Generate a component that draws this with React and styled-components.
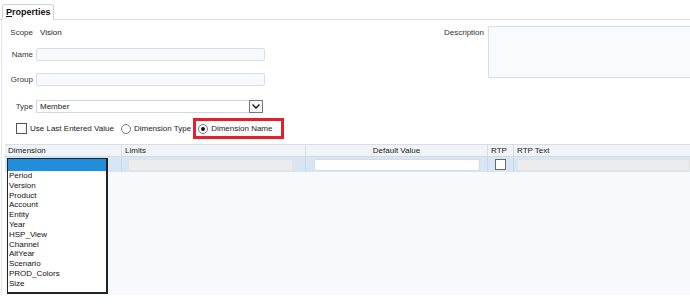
import React from 'react'
import styled, { createGlobalStyle } from 'styled-components'

const GlobalStyle = createGlobalStyle`
  body {
    margin: 0;
    background: #fff;
    font-family: 'Liberation Sans', Arial, sans-serif;
    font-size: 8px;
    color: #222;
  }
  * { box-sizing: border-box; }
`

const dimensions = [
  'Period', 'Version', 'Product', 'Account', 'Entity', 'Year',
  'HSP_View', 'Channel', 'AltYear', 'Scenario', 'PROD_Colors', 'Size',
]

const columns = [
  { label: 'Dimension' },
  { label: 'Limits' },
  { label: 'Default Value', center: true },
  { label: 'RTP' },
  { label: 'RTP Text' },
]

const Page = () => (
  <Wrapper>
    <GlobalStyle />
    <TabBar>
      <Tab>
        <u>P</u>roperties
      </Tab>
    </TabBar>
    <Panel>
      <Form>
        <LeftCol>
          <Row $top={6} $h={12}>
            <Label>Scope</Label>
            <Value>Vision</Value>
          </Row>
          <Row $top={10} $h={13}>
            <Label>Name</Label>
            <Input />
          </Row>
          <Row $top={12} $h={13}>
            <Label>Group</Label>
            <Input />
          </Row>
          <Row $top={14} $h={13}>
            <Label>Type</Label>
            <Select>
              <span>Member</span>
              <SelectButton>
                <svg width='10' height='7' viewBox='0 0 10 7'>
                  <polyline points='1.5,1.5 5,5 8.5,1.5' fill='none' stroke='#111' strokeWidth='1.4' />
                </svg>
              </SelectButton>
            </Select>
          </Row>
          <Options>
            <Check />
            <OptionText>Use Last Entered Value</OptionText>
            <Radio />
            <OptionText>Dimension Type</OptionText>
            <Highlight>
              <Radio $checked />
              <OptionText>Dimension Name</OptionText>
            </Highlight>
          </Options>
        </LeftCol>
        <RightCol>
          <DescLabel>Description</DescLabel>
          <TextArea />
        </RightCol>
      </Form>

      <Table>
        <HeaderRow>
          {columns.map((c) => (
            <HeadCell key={c.label} $center={c.center}>
              {c.label}
            </HeadCell>
          ))}
        </HeaderRow>
        <DataRow>
          <Cell />
          <Cell>
            <Field $grey $left={6} $right={12} />
          </Cell>
          <Cell>
            <Field $left={8} $right={7} />
          </Cell>
          <Cell>
            <RowCheck />
          </Cell>
          <Cell>
            <Field $grey $left={3} $right={0} />
          </Cell>
        </DataRow>
        <TableBody />
        <ListBox>
          <ListSelected />
          {dimensions.map((d) => (
            <ListItem key={d}>{d}</ListItem>
          ))}
        </ListBox>
      </Table>
    </Panel>
  </Wrapper>
)

const Wrapper = styled.div`
  width: 690px;
  height: 308px;
  overflow: hidden;
`

const TabBar = styled.div`
  height: 20px;
  display: flex;
  align-items: flex-end;
  padding-left: 2px;
  border-bottom: 1px solid #d6dadf;
`

const Tab = styled.div`
  height: 16px;
  margin-bottom: -1px;
  padding: 1px 2px 0 3px;
  background: #fff;
  border: 1px solid #ccd1d7;
  border-bottom-color: #fff;
  border-radius: 3px 3px 0 0;
  font-size: 9px;
  font-weight: bold;
  line-height: 13px;
  color: #111;
`

const Panel = styled.div`
  margin-left: 1px;
  height: 276px;
  border-left: 1px solid #e2e6ea;
`

const Form = styled.div`
  display: flex;
  height: 124px;
`

const LeftCol = styled.div`
  width: 300px;
  display: flex;
  flex-direction: column;
`

const Row = styled.div`
  display: flex;
  align-items: center;
  height: ${(p) => p.$h}px;
  margin-top: ${(p) => p.$top}px;
`

const Label = styled.div`
  width: 32px;
  padding-right: 1px;
  text-align: right;
  color: #333;
`

const Value = styled.div`
  margin-left: 6px;
  color: #222;
`

const Input = styled.div`
  margin-left: 2px;
  width: 229px;
  height: 13px;
  background: #f7fafd;
  border: 1px solid #d9dee4;
  border-radius: 2px;
`

const Select = styled.div`
  margin-left: 2px;
  width: 227px;
  height: 13px;
  display: flex;
  align-items: center;
  justify-content: space-between;
  padding-left: 3px;
  background: #fff;
  border: 1px solid #d4d9df;
  color: #222;
`

const SelectButton = styled.div`
  width: 14px;
  height: 13px;
  margin-right: -1px;
  display: flex;
  align-items: center;
  justify-content: center;
  background: #f7f7f7;
  border: 1px solid #777;
`

const Options = styled.div`
  display: flex;
  align-items: center;
  height: 21px;
  margin-top: 5px;
  padding-left: 14px;
`

const Check = styled.div`
  width: 11px;
  height: 11px;
  border: 1px solid #555;
  background: #fff;
`

const OptionText = styled.span`
  margin-left: 3px;
  margin-right: 7px;
  color: #222;
  white-space: nowrap;
`

const Radio = styled.div`
  position: relative;
  width: 10px;
  height: 10px;
  border-radius: 50%;
  border: 1px solid #777;
  background: #fff;
  &::after {
    content: '';
    display: ${(p) => (p.$checked ? 'block' : 'none')};
    position: absolute;
    left: 2px;
    top: 2px;
    width: 4px;
    height: 4px;
    border-radius: 50%;
    background: #111;
  }
`

const Highlight = styled.div`
  display: flex;
  align-items: center;
  height: 21px;
  width: 91px;
  margin-left: -5px;
  padding-left: 2px;
  border: 3px solid #e3202b;
`

const RightCol = styled.div`
  flex: 1;
  display: flex;
  justify-content: flex-end;
  padding-top: 6px;
`

const DescLabel = styled.div`
  margin-top: 2px;
  margin-right: 4px;
  height: 10px;
  color: #333;
`

const TextArea = styled.div`
  width: 202px;
  height: 52px;
  background: #f7fbfe;
  border: 1px solid #d9dee4;
  border-right: none;
  border-radius: 2px 0 0 2px;
`

const Table = styled.div`
  position: relative;
  margin-left: 3px;
`

const grid = `
  display: grid;
  grid-template-columns: 117px 184px 182px 26px 1fr;
`

const HeaderRow = styled.div`
  ${grid}
  height: 13px;
  background: #f0f4f9;
  border-top: 1px solid #d8dee6;
  border-bottom: 1px solid #d2dae4;
`

const HeadCell = styled.div`
  padding-left: ${(p) => (p.$center ? 0 : 3)}px;
  text-align: ${(p) => (p.$center ? 'center' : 'left')};
  line-height: 11px;
  color: #222;
  border-right: 1px solid #d8dee6;
  &:last-child { border-right: none; }
`

const DataRow = styled.div`
  ${grid}
  height: 15px;
  background: #d8e5f2;
`

const Cell = styled.div`
  display: flex;
  align-items: center;
  border-right: 1px solid #c9d8e8;
  &:last-child { border-right: none; }
`

const Field = styled.div`
  flex: 1;
  height: 12px;
  margin-left: ${(p) => p.$left}px;
  margin-right: ${(p) => p.$right}px;
  background: ${(p) => (p.$grey ? '#ececec' : '#fff')};
  border: 1px solid ${(p) => (p.$grey ? '#e2e2e2' : '#d5dce5')};
  border-radius: 2px;
`

const RowCheck = styled.div`
  width: 11px;
  height: 11px;
  margin-left: 7px;
  background: #fff;
  border: 1px solid #6a6a6a;
`

const TableBody = styled.div`
  height: 123px;
  background: #f7fafd;
`

const ListBox = styled.div`
  position: absolute;
  left: 2px;
  top: 14px;
  width: 101px;
  padding-bottom: 3px;
  background: #fff;
  border: 1px solid #222;
  border-right-width: 2px;
  border-bottom-width: 2px;
`

const ListSelected = styled.div`
  height: 12px;
  background: #1e8fd8;
`

const ListItem = styled.div`
  height: 9.8px;
  line-height: 9.8px;
  padding-left: 1px;
  color: #111;
`

export default Page
